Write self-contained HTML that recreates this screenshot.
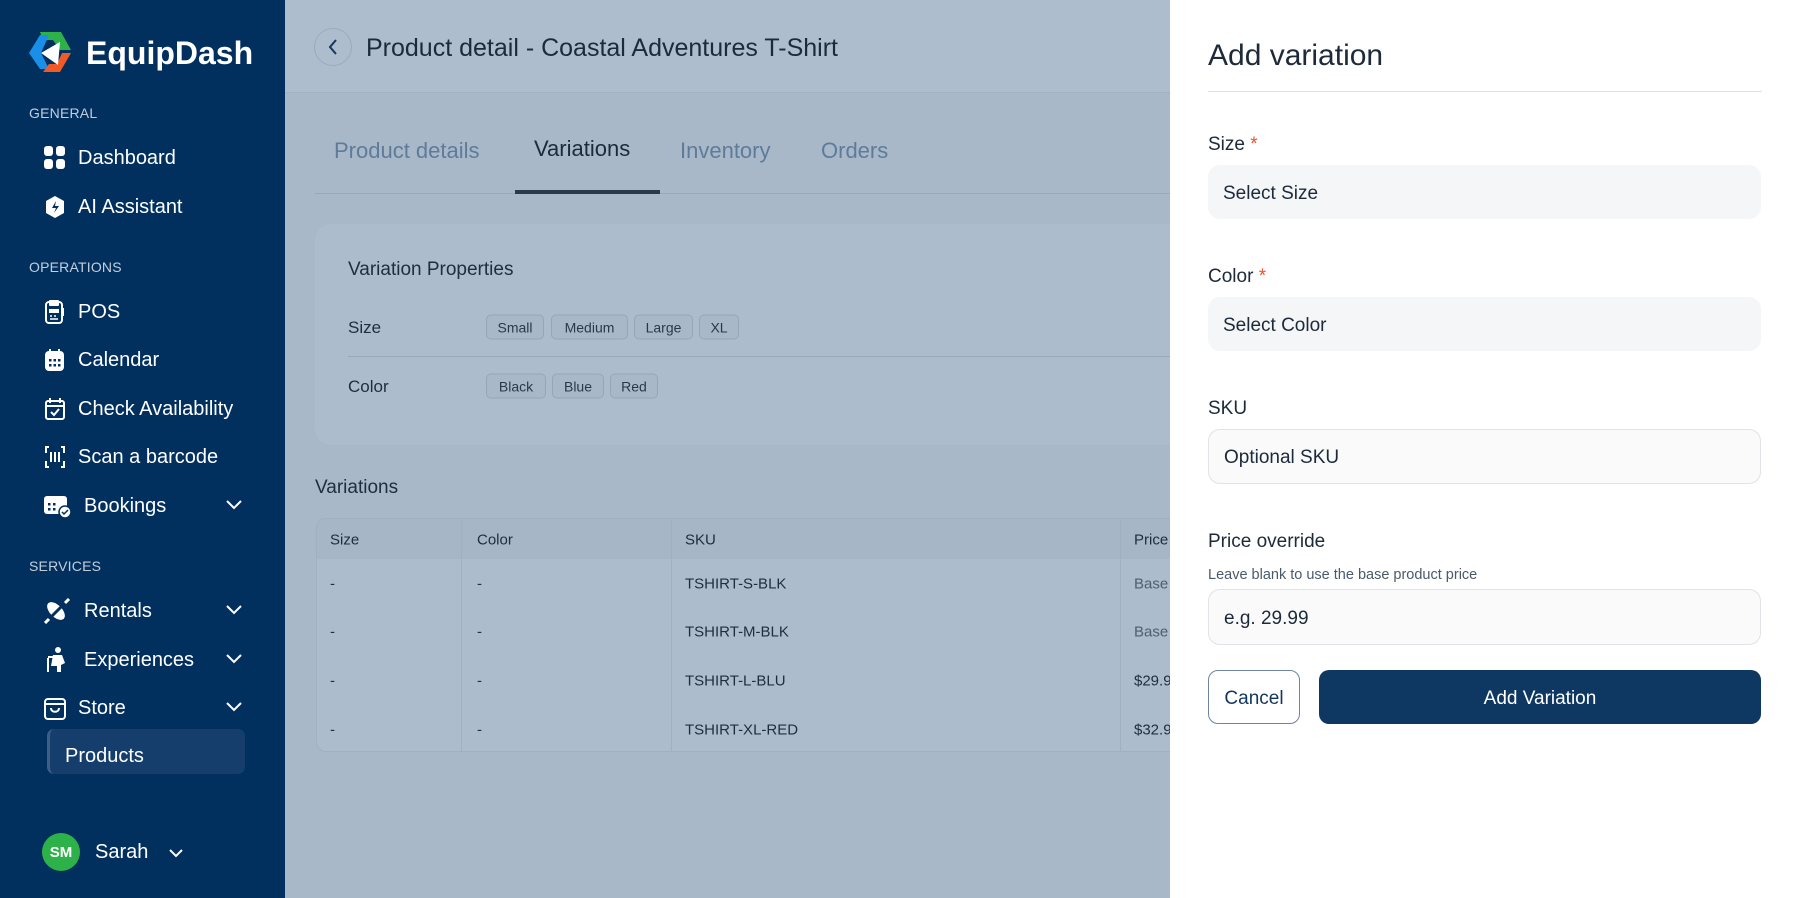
<!DOCTYPE html>
<html><head><meta charset="utf-8"><style>
*{box-sizing:border-box;margin:0;padding:0}
body{width:1800px;height:898px;overflow:hidden;font-family:"Liberation Sans",sans-serif;position:relative;background:#a8b8c9}
.sb{position:absolute;left:0;top:0;width:285px;height:898px;background:#01305f;color:#fff}
.abs{position:absolute}
.sec{position:absolute;left:29px;font-size:14px;color:#c4cedb;letter-spacing:.2px}
.it{position:absolute;left:44px;font-size:20px;display:flex;align-items:center;transform:translateY(-50%)}
.it svg{margin-right:12px}
.chev{position:absolute;left:226px;transform:translateY(-50%)}
.main{position:absolute;left:285px;top:0;width:885px;height:898px;background:#a8b8c9}
.hdr{position:absolute;left:0;top:0;width:885px;height:93px;background:#adbdce;border-bottom:1px solid #a2b2c4}
.tab{position:absolute;top:151px;transform:translateY(-50%);font-size:22px;color:#5f7b9a}
.card{position:absolute;left:30px;top:224px;width:880px;height:221px;background:#adbccd;border-radius:16px}
.chip{position:absolute;height:25px;border:1px solid #95a6b8;border-radius:5px;background:#a9b8c9;font-size:14px;color:#2a3848;display:flex;align-items:center;justify-content:center;transform:translateY(-50%)}
.lbl{position:absolute;font-size:18px;color:#1f2d3d;transform:translateY(-50%)}
.tbl{position:absolute;left:31px;top:518px;width:880px;height:234px;border:1px solid #a0b0c2;border-radius:10px;overflow:hidden;background:#adbccc}
.cell{position:absolute;font-size:15px;color:#1f2d3d;transform:translateY(-50%)}
.vl{position:absolute;top:0;width:1px;height:234px;background:#a0b0c2}
.panel{position:absolute;left:1170px;top:0;width:630px;height:898px;background:#fff}
.pl{position:absolute;left:38px;font-size:19px;color:#1c2a3a;transform:translateY(-50%)}
.inp{position:absolute;left:38px;width:553px;border-radius:12px;background:#f5f6f8;font-size:19px;color:#1c2a3a;padding-left:15px;padding-top:3px;display:flex;align-items:center}
</style></head><body>
<div class="sb">
 <svg class="abs" style="left:29px;top:32px" width="42" height="42" viewBox="0 0 42 42">
  <polygon points="11,0 32,0 42,18 31,18 24,8 14,8" fill="#2db24a"/>
  <polygon points="0,21 11,3 20,3 12,21 20,37 11,37" fill="#1a8fe8"/>
  <polygon points="42,21 31,40 14,40 20,32 28,32 33,21" fill="#f05a28"/>
  <polygon points="12,21 31,10 29,33" fill="#fff"/>
 </svg>
 <div class="abs" style="left:86px;top:35px;font-size:32px;font-weight:bold">EquipDash</div>
 <div class="sec" style="top:105px">GENERAL</div>
 <div class="it" style="top:158px"><svg width="22" height="24" viewBox="0 0 22 24"><rect x="0" y="0" width="9" height="10" rx="3" fill="#fff"/><rect x="12" y="0" width="9" height="10" rx="3" fill="#fff"/><rect x="0" y="13" width="9" height="10" rx="3" fill="#fff"/><rect x="12" y="13" width="9" height="10" rx="3" fill="#fff"/></svg>Dashboard</div>
 <div class="it" style="top:207px"><svg width="22" height="24" viewBox="0 0 22 24"><polygon points="11,1 20,6 20,18 11,23 2,18 2,6" fill="#fff"/><path d="M12 6l-4 7h4l-2 5 5-7h-4z" fill="#01305f"/></svg>AI Assistant</div>
 <div class="sec" style="top:259px">OPERATIONS</div>
 <div class="it" style="top:312px"><svg width="22" height="26" viewBox="0 0 22 26"><rect x="2" y="3" width="16" height="21" rx="3" fill="none" stroke="#fff" stroke-width="2"/><rect x="5" y="1" width="10" height="6" rx="1" fill="#fff"/><rect x="5" y="10" width="10" height="4" fill="#fff"/><path d="M6 17h2M10 17h2M14 17h0M6 20h8" stroke="#fff" stroke-width="1.5"/><path d="M19 9v8" stroke="#fff" stroke-width="2"/></svg>POS</div>
 <div class="it" style="top:360px"><svg width="22" height="24" viewBox="0 0 22 24"><rect x="1" y="3" width="19" height="20" rx="4" fill="#fff"/><path d="M6 1v4M15 1v4" stroke="#fff" stroke-width="2"/><g fill="#01305f"><rect x="5" y="11" width="2.5" height="2.5"/><rect x="9.5" y="11" width="2.5" height="2.5"/><rect x="14" y="11" width="2.5" height="2.5"/><rect x="5" y="16" width="2.5" height="2.5"/><rect x="9.5" y="16" width="2.5" height="2.5"/><rect x="14" y="16" width="2.5" height="2.5"/></g></svg>Calendar</div>
 <div class="it" style="top:409px"><svg width="22" height="24" viewBox="0 0 22 24"><rect x="2" y="4" width="18" height="18" rx="2" fill="none" stroke="#fff" stroke-width="2"/><path d="M6 1v5M16 1v5M2 9h18M7 15l3 3 5-6" stroke="#fff" stroke-width="2" fill="none"/></svg>Check Availability</div>
 <div class="it" style="top:457px"><svg width="22" height="24" viewBox="0 0 22 24"><path d="M5 2H2v6M17 2h3v6M5 22H2v-6M17 22h3v-6M7 7v10M11 7v10M15 7v10" stroke="#fff" stroke-width="2" fill="none"/></svg>Scan a barcode</div>
 <div class="it" style="top:506px"><svg width="28" height="24" viewBox="0 0 28 24"><rect x="0" y="2" width="23" height="18" rx="3" fill="#fff"/><g fill="#01305f"><rect x="4" y="9" width="2.5" height="2.5"/><rect x="9" y="9" width="2.5" height="2.5"/><rect x="4" y="14" width="2.5" height="2.5"/><rect x="9" y="14" width="2.5" height="2.5"/></g><circle cx="21" cy="18" r="6" fill="#fff" stroke="#01305f" stroke-width="1.5"/><path d="M18 18l2 2 4-4" stroke="#01305f" stroke-width="1.5" fill="none"/></svg>Bookings</div>
 <svg class="chev" style="top:505px" width="16" height="10" viewBox="0 0 16 10"><path d="M1 1l7 7 7-7" stroke="#fff" stroke-width="2" fill="none"/></svg>
 <div class="sec" style="top:558px">SERVICES</div>
 <div class="it" style="top:611px"><svg width="28" height="26" viewBox="0 0 28 26"><ellipse cx="12" cy="13" rx="6" ry="11" transform="rotate(-45 12 13)" fill="#fff"/><path d="M2 24L24 2" stroke="#01305f" stroke-width="3"/><path d="M1 25l4-4M21 5l4-4" stroke="#fff" stroke-width="3"/></svg>Rentals</div>
 <svg class="chev" style="top:610px" width="16" height="10" viewBox="0 0 16 10"><path d="M1 1l7 7 7-7" stroke="#fff" stroke-width="2" fill="none"/></svg>
 <div class="it" style="top:660px"><svg width="28" height="28" viewBox="0 0 28 28"><circle cx="14" cy="4" r="3" fill="#fff"/><path d="M9 9h9l3 8-4 2v7h-4v-6H7" fill="#fff"/><path d="M4 12v14" stroke="#fff" stroke-width="2"/><path d="M4 11h6" stroke="#fff" stroke-width="2"/></svg>Experiences</div>
 <svg class="chev" style="top:659px" width="16" height="10" viewBox="0 0 16 10"><path d="M1 1l7 7 7-7" stroke="#fff" stroke-width="2" fill="none"/></svg>
 <div class="it" style="top:708px"><svg width="22" height="24" viewBox="0 0 22 24"><rect x="1" y="3" width="20" height="20" rx="3" fill="none" stroke="#fff" stroke-width="2"/><path d="M1 8h20M7 12c0 5 8 5 8 0" stroke="#fff" stroke-width="2" fill="none"/></svg>Store</div>
 <svg class="chev" style="top:707px" width="16" height="10" viewBox="0 0 16 10"><path d="M1 1l7 7 7-7" stroke="#fff" stroke-width="2" fill="none"/></svg>
 <div class="abs" style="left:47px;top:729px;width:198px;height:45px;background:#153e6d;border-radius:7px;border-left:3px solid #3c5f88"></div>
 <div class="abs" style="left:65px;top:745px;font-size:20px">Products</div>
 <div class="abs" style="left:42px;top:833px;width:38px;height:38px;border-radius:50%;background:#2db24a;font-size:15px;font-weight:bold;display:flex;align-items:center;justify-content:center">SM</div>
 <div class="abs" style="left:95px;top:841px;font-size:20px">Sarah</div>
 <svg class="abs" style="left:169px;top:849px" width="14" height="9" viewBox="0 0 14 9"><path d="M1 1l6 6 6-6" stroke="#fff" stroke-width="2" fill="none"/></svg>
</div>
<div class="main">
 <div class="hdr">
  <div class="abs" style="left:29px;top:28px;width:38px;height:38px;border-radius:50%;border:1px solid #9aabbd"></div>
  <svg class="abs" style="left:43px;top:38px" width="10" height="18" viewBox="0 0 10 18"><path d="M8 2L2 9l6 7" stroke="#12365e" stroke-width="2" fill="none"/></svg>
  <div class="abs" style="left:81px;top:34px;font-size:25px;color:#1c2a3a">Product detail - Coastal Adventures T-Shirt</div>
 </div>
 <div class="tab" style="left:49px">Product details</div>
 <div class="tab" style="left:249px;top:149px;color:#1c2a3a">Variations</div>
 <div class="tab" style="left:395px">Inventory</div>
 <div class="tab" style="left:536px">Orders</div>
 <div class="abs" style="left:30px;top:193px;width:855px;height:1px;background:#98a9bb"></div>
 <div class="abs" style="left:230px;top:190px;width:145px;height:4px;background:#2a3a4c"></div>
 <div class="card">
  <div class="lbl" style="left:33px;top:46px;font-size:19px">Variation Properties</div>
  <div class="lbl" style="left:33px;top:104px;font-size:17px">Size</div>
  <div class="chip" style="left:171px;top:103px;width:58px">Small</div>
  <div class="chip" style="left:236px;top:103px;width:77px">Medium</div>
  <div class="chip" style="left:319px;top:103px;width:59px">Large</div>
  <div class="chip" style="left:384px;top:103px;width:40px">XL</div>
  <div class="abs" style="left:33px;top:132px;width:850px;height:1px;background:#98a9bb"></div>
  <div class="lbl" style="left:33px;top:163px;font-size:17px">Color</div>
  <div class="chip" style="left:171px;top:162px;width:60px">Black</div>
  <div class="chip" style="left:237px;top:162px;width:52px">Blue</div>
  <div class="chip" style="left:295px;top:162px;width:48px">Red</div>
 </div>
 <div class="lbl" style="left:30px;top:488px;font-size:19px">Variations</div>
 <div class="tbl">
  <div class="abs" style="left:0;top:0;width:880px;height:40px;background:#a6b6c7"></div>
  <div class="vl" style="left:144px"></div><div class="vl" style="left:354px"></div><div class="vl" style="left:803px"></div>
  <div class="cell" style="left:13px;top:21px">Size</div><div class="cell" style="left:160px;top:21px">Color</div><div class="cell" style="left:368px;top:21px">SKU</div><div class="cell" style="left:817px;top:21px">Price</div>
  <div class="cell" style="left:13px;top:65px">-</div><div class="cell" style="left:160px;top:65px">-</div><div class="cell" style="left:368px;top:65px">TSHIRT-S-BLK</div><div class="cell" style="left:817px;top:65px;color:#4e5e70">Base</div>
  <div class="cell" style="left:13px;top:113px">-</div><div class="cell" style="left:160px;top:113px">-</div><div class="cell" style="left:368px;top:113px">TSHIRT-M-BLK</div><div class="cell" style="left:817px;top:113px;color:#4e5e70">Base</div>
  <div class="cell" style="left:13px;top:162px">-</div><div class="cell" style="left:160px;top:162px">-</div><div class="cell" style="left:368px;top:162px">TSHIRT-L-BLU</div><div class="cell" style="left:817px;top:162px">$29.99</div>
  <div class="cell" style="left:13px;top:211px">-</div><div class="cell" style="left:160px;top:211px">-</div><div class="cell" style="left:368px;top:211px">TSHIRT-XL-RED</div><div class="cell" style="left:817px;top:211px">$32.99</div>
 </div>
</div>
<div class="panel">
 <div class="abs" style="left:38px;top:39px;font-size:30px;color:#1c2a3a">Add variation</div>
 <div class="abs" style="left:38px;top:91px;width:554px;height:1px;background:#dde1e6"></div>
 <div class="pl" style="top:145px">Size <span style="color:#f0502a">*</span></div>
 <div class="inp" style="top:165px;height:54px">Select Size</div>
 <div class="pl" style="top:277px">Color <span style="color:#f0502a">*</span></div>
 <div class="inp" style="top:297px;height:54px">Select Color</div>
 <div class="pl" style="top:409px">SKU</div>
 <div class="inp" style="top:429px;height:55px;background:#fafafa;border:1px solid #e0e3e7">Optional SKU</div>
 <div class="pl" style="top:542px">Price override</div>
 <div class="pl" style="top:575px;font-size:14.5px;color:#4a5a6b">Leave blank to use the base product price</div>
 <div class="inp" style="top:589px;height:56px;background:#fafafa;border:1px solid #e0e3e7">e.g. 29.99</div>
 <div class="abs" style="left:38px;top:670px;width:92px;height:54px;border:1.5px solid #6e84a0;border-radius:10px;font-size:19px;color:#12365e;display:flex;align-items:center;justify-content:center;padding-top:3px">Cancel</div>
 <div class="abs" style="left:149px;top:670px;width:442px;height:54px;background:#0e3862;border-radius:10px;font-size:19px;color:#fff;display:flex;align-items:center;justify-content:center;padding-top:3px">Add Variation</div>
</div>
</body></html>
